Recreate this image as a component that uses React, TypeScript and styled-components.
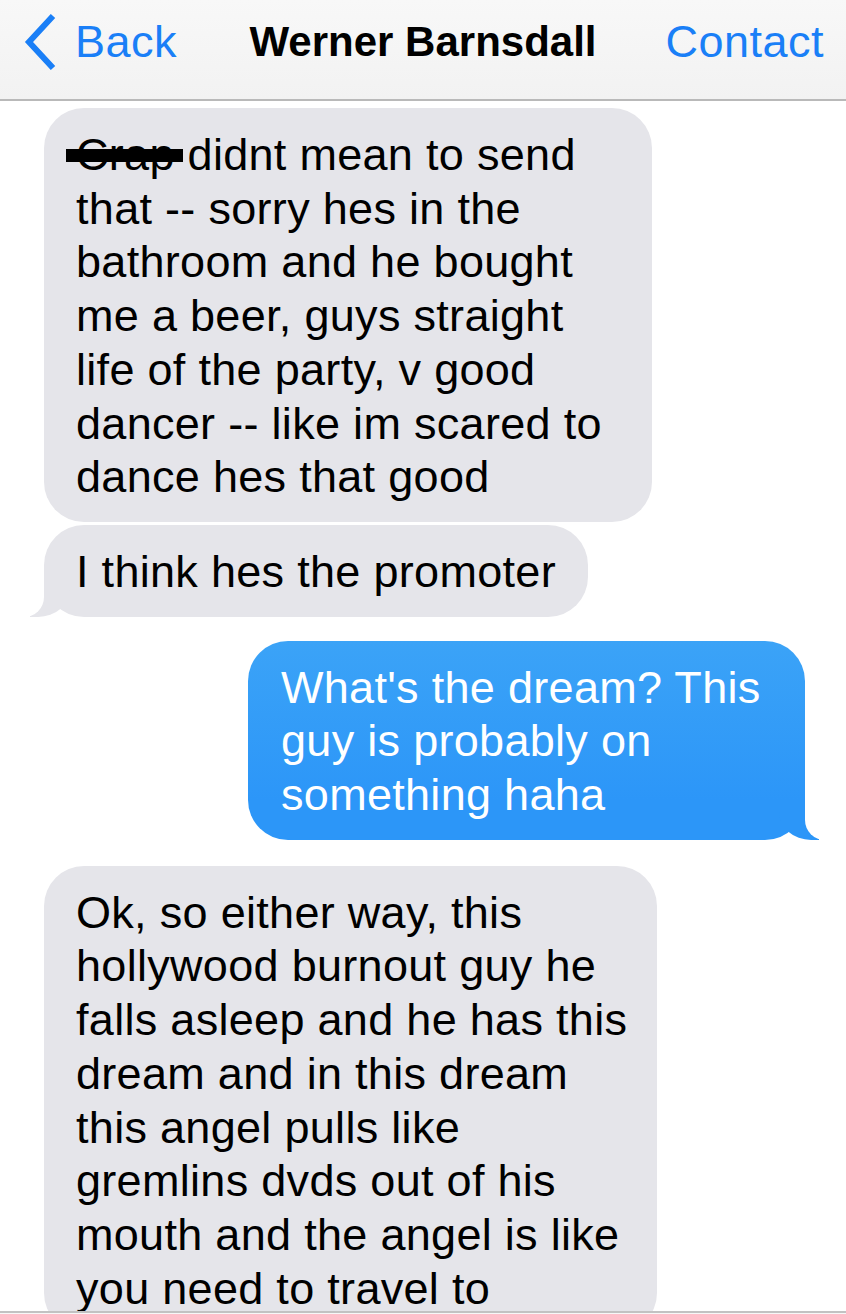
import React from "react";
import styled, { createGlobalStyle, css } from "styled-components";

const GlobalStyle = createGlobalStyle`
  html, body {
    margin: 0;
    padding: 0;
    background: #ffffff;
  }
  body {
    font-family: "Liberation Sans", Arial, Helvetica, sans-serif;
    -webkit-font-smoothing: antialiased;
  }
  * { box-sizing: border-box; }
`;

const Page = styled.div`
  width: 846px;
  height: 1314px;
  display: flex;
  flex-direction: column;
  overflow: hidden;
  background: #ffffff;
`;

const NavBar = styled.header`
  flex: 0 0 auto;
  height: 101px;
  display: grid;
  grid-template-columns: 1fr auto 1fr;
  align-items: center;
  padding: 0 22px 16px 22px;
  background: linear-gradient(#f8f8f8, #f2f2f2);
  border-bottom: 2px solid #b9b9b9;
`;

const NavButton = styled.button<{ $align: "start" | "end" }>`
  display: flex;
  align-items: center;
  justify-self: ${(p) => p.$align};
  gap: 19px;
  padding: 0;
  margin: 0;
  border: 0;
  background: none;
  color: #1a7ff7;
  font-family: inherit;
  font-size: 45px;
  letter-spacing: 0.5px;
  line-height: 52px;
  cursor: pointer;
`;

const Title = styled.h1`
  margin: 0;
  font-size: 42px;
  line-height: 52px;
  font-weight: 700;
  color: #000000;
  white-space: nowrap;
`;

const Thread = styled.main`
  flex: 1 1 auto;
  min-height: 0;
  overflow: hidden;
  display: flex;
  flex-direction: column;
  padding: 7px 41px 0 44px;
`;

const BLUE_TOP = "#3ba3f7";
const BLUE_BOTTOM = "#2c96f8";
const GRAY = "#e5e5ea";

const grayTail = css`
  &::before {
    content: "";
    position: absolute;
    bottom: 0;
    left: -14px;
    width: 40px;
    height: 40px;
    background: ${GRAY};
    border-bottom-right-radius: 32px 28px;
    z-index: 0;
  }
  &::after {
    content: "";
    position: absolute;
    bottom: 0;
    left: -20px;
    width: 20px;
    height: 40px;
    background: #ffffff;
    border-bottom-right-radius: 20px;
    z-index: 1;
  }
`;

const blueTail = css`
  &::before {
    content: "";
    position: absolute;
    bottom: 0;
    right: -14px;
    width: 40px;
    height: 40px;
    background: ${BLUE_BOTTOM};
    border-bottom-left-radius: 32px 28px;
    z-index: 0;
  }
  &::after {
    content: "";
    position: absolute;
    bottom: 0;
    right: -20px;
    width: 20px;
    height: 40px;
    background: #ffffff;
    border-bottom-left-radius: 20px;
    z-index: 1;
  }
`;

const Bubble = styled.div<{
  $sent?: boolean;
  $tail?: boolean;
  $width: number;
  $gap: number;
}>`
  position: relative;
  flex: 0 0 auto;
  width: ${(p) => p.$width}px;
  margin-top: ${(p) => p.$gap}px;
  align-self: ${(p) => (p.$sent ? "flex-end" : "flex-start")};
  padding: 20px 18px 18px ${(p) => (p.$sent ? 33 : 32)}px;
  border-radius: 40px;
  font-size: 45px;
  letter-spacing: 0.3px;
  line-height: 53.7px;
  white-space: nowrap;
  color: ${(p) => (p.$sent ? "#ffffff" : "#000000")};
  background: ${(p) =>
    p.$sent
      ? `linear-gradient(${BLUE_TOP}, ${BLUE_BOTTOM} calc(100% - 40px), ${BLUE_BOTTOM})`
      : GRAY};
  ${(p) => p.$tail && (p.$sent ? blueTail : grayTail)}
`;

const Line = styled.span`
  position: relative;
  z-index: 2;
  display: block;
`;

const Redacted = styled.span`
  position: relative;
  &::after {
    content: "";
    position: absolute;
    left: -10px;
    right: -8px;
    top: 20px;
    height: 13px;
    background: #000000;
  }
`;

const Footer = styled.footer`
  flex: 0 0 3px;
  border-top: 2px solid #c2c2c2;
  background: #f7f7f7;
`;

const Chevron = () => (
  <svg width="34" height="56" viewBox="0 0 34 56" aria-hidden="true">
    <path
      d="M31 2 L7 28 L31 54"
      fill="none"
      stroke="#1a7ff7"
      strokeWidth="6"
      strokeLinejoin="miter"
    />
  </svg>
);

type Msg = {
  sent?: boolean;
  tail?: boolean;
  width: number;
  gap: number;
  lines: React.ReactNode[];
};

const messages: Msg[] = [
  {
    width: 608,
    gap: 0,
    lines: [
      <>
        <Redacted>Crap</Redacted> didnt mean to send
      </>,
      "that -- sorry hes in the",
      "bathroom and he bought",
      "me a beer, guys straight",
      "life of the party, v good",
      "dancer -- like im scared to",
      "dance hes that good",
    ],
  },
  {
    width: 544,
    gap: 3,
    tail: true,
    lines: ["I think hes the promoter"],
  },
  {
    sent: true,
    tail: true,
    width: 557,
    gap: 24,
    lines: [
      "What's the dream? This",
      "guy is probably on",
      "something haha",
    ],
  },
  {
    width: 613,
    gap: 26,
    lines: [
      "Ok, so either way, this",
      "hollywood burnout guy he",
      "falls asleep and he has this",
      "dream and in this dream",
      "this angel pulls like",
      "gremlins dvds out of his",
      "mouth and the angel is like",
      "you need to travel to",
    ],
  },
];

export default function App() {
  return (
    <>
      <GlobalStyle />
      <Page>
        <NavBar>
          <NavButton $align="start">
            <Chevron />
            <span>Back</span>
          </NavButton>
          <Title>Werner Barnsdall</Title>
          <NavButton $align="end">Contact</NavButton>
        </NavBar>
        <Thread>
          {messages.map((m, i) => (
            <Bubble
              key={i}
              $sent={m.sent}
              $tail={m.tail}
              $width={m.width}
              $gap={m.gap}
            >
              {m.lines.map((l, j) => (
                <Line key={j}>{l}</Line>
              ))}
            </Bubble>
          ))}
        </Thread>
        <Footer />
      </Page>
    </>
  );
}
